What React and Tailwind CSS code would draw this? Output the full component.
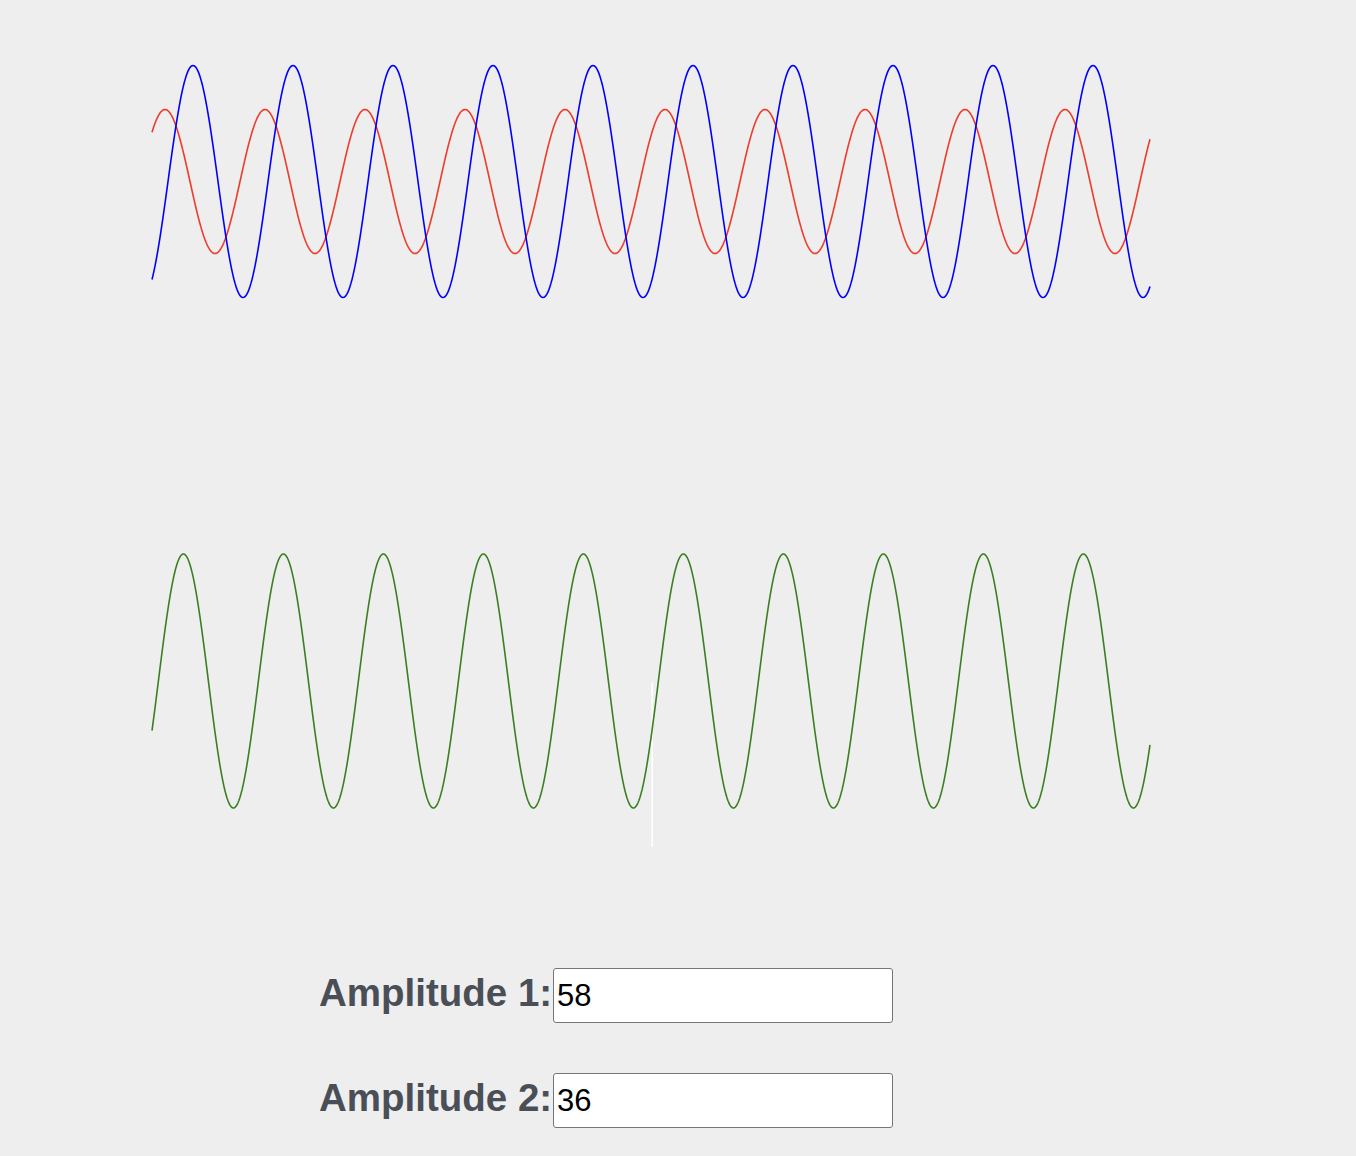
import React from 'react'

const X0 = 152
const X1 = 1150

function wave(fn) {
  let d = ''
  for (let x = X0; x <= X1; x += 1) {
    d += (x === X0 ? 'M' : 'L') + (x - 150) + ' ' + fn(x).toFixed(2) + ' '
  }
  return d
}

const TAU = Math.PI * 2
const blue = (x) => 116 * Math.cos((TAU * (x - 193)) / 100)
const red = (x) => 72 * Math.cos((TAU * (x - 165)) / 100)

export default function App() {
  const blueD = wave((x) => 181.5 - blue(x))
  const redD = wave((x) => 181.5 - red(x))
  const sumD = wave((x) => 331 - 1.02 * (blue(x) + red(x)))

  return (
    <div className="min-h-screen bg-[#eeeeee] font-['Liberation_Sans',Arial,sans-serif]">
      <div className="pl-[150px]">
        <svg width="1002" height="350" className="block">
          <path d={redD} fill="none" stroke="#ee3b2b" strokeWidth="1.6" />
          <path d={blueD} fill="none" stroke="#0000ff" strokeWidth="1.6" />
        </svg>
        <svg width="1002" height="550" className="block">
          <rect x="501.5" y="332" width="1.5" height="165" fill="#ffffff" />
          <path d={sumD} fill="none" stroke="#3a7f22" strokeWidth="1.6" />
        </svg>
      </div>

      <div className="flex flex-col gap-[50px] pt-[68px] pl-[319px] pb-[29px]">
        {[
          ['Amplitude 1:', '58'],
          ['Amplitude 2:', '36'],
        ].map(([label, value]) => (
          <div key={label} className="flex items-center">
            <label className="text-[38.5px] font-bold leading-none text-[#4a4f57] w-[234px] pb-[5px] whitespace-nowrap">{label}</label>
            <input
              defaultValue={value}
              className="w-[340px] h-[55px] bg-white border border-[#767676] rounded-[3px] px-[3px] text-[31px] text-black outline-none"
            />
          </div>
        ))}
      </div>
    </div>
  )
}
